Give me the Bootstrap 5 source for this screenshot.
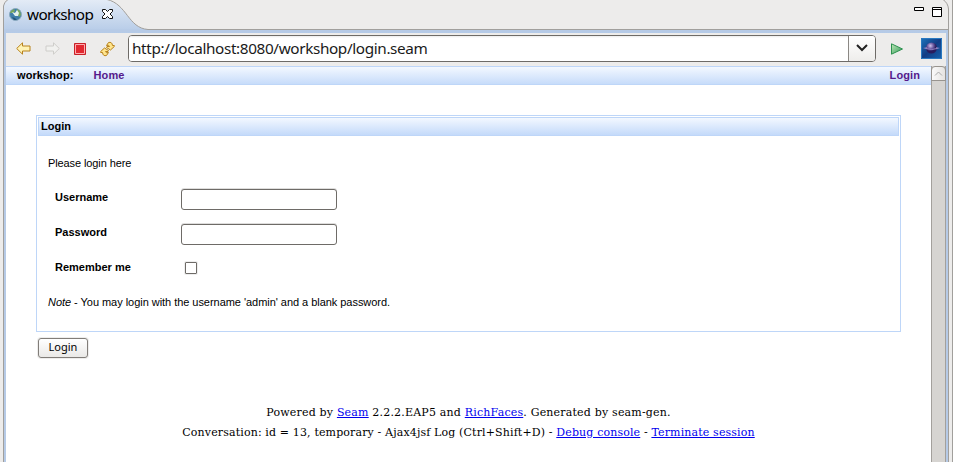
<!DOCTYPE html>
<html lang="en">
<head>
<meta charset="utf-8">
<title>workshop</title>
<meta name="viewport" content="width=device-width, initial-scale=1">
<link rel="stylesheet" href="https://cdn.jsdelivr.net/npm/bootstrap@5.3.0/dist/css/bootstrap.min.css">
<style>
body{background:#edeceb;color:#000;font-family:"Liberation Sans",Arial,sans-serif;font-size:11px;line-height:14px}
svg{display:block;flex:none}
.ide{height:462px;width:953px}
.tabstrip{height:29px}
.tab-shape{z-index:0}
.tab-title{z-index:1;padding:0 0 0 9px;height:28px}
.tab-title span{font:15.3px/20px "Noto Sans","Open Sans",sans-serif;width:66px;margin:0 9px 0 5px;letter-spacing:-.62px;white-space:nowrap}
.win-icons{padding:7px 10px 0 0;gap:8px;z-index:1}
.viewer{width:946px;margin-left:3px;border:solid #a19f9c;border-width:0 1px}
.viewer-in{border:solid #b6cae6;border-width:0 2px;background:#edeceb;padding-top:3px}
.toolbar{height:34px;padding:0 4px 1px 10px}
.tool-gap{margin-left:14px}
.url-box{width:748px;height:27px;margin-left:13px;border:1px solid #6e6b67;border-radius:4px;background:#fff;overflow:hidden}
.url-box input{border:0;outline:0;padding:0 0 1px 3px;color:#1a1a1a;font:15.3px/24px "Noto Sans","Open Sans",sans-serif;letter-spacing:-.37px;background:linear-gradient(#ececec,#fff 2px);min-width:0}
.drop{width:27px;border:0;border-left:1px solid #8b8884;background:linear-gradient(#fff,#eeedeb);padding:0 0 2px}
.menu-bar{height:19px;border:solid #bed6f8;border-width:1px 0;background:linear-gradient(#f3f8ff,#c7dcfa);padding:0 11px 2px;font-weight:700;letter-spacing:.1px}
.menu-bar a{color:#551a8b;text-decoration:none}
.scroller{width:15px;background:#d6d4d1;border:solid #a3a09c;border-width:0 1px}
.scroll-up{height:15px;margin:0 -1px;border:1px solid #98948f;border-radius:4px 4px 0 0;background:linear-gradient(90deg,#fafafa,#e5e3e1);padding:0}
.login-panel{margin:30px 30px 0;height:217px;border:1px solid #bed6f8;padding:1px}
.panel-head{height:19px;border:1px solid #bed6f8;background:linear-gradient(#f3f8ff,#c4dafa);padding:0 2px 1px;font-weight:700}
.panel-content{padding:20px 10px 0}
.panel-content .intro{letter-spacing:-.1px}
.panel-content .note-line{letter-spacing:-.04px}
.field-row{height:35px;padding-left:7px}
.field-row label{width:126px;font-weight:700}
.field-row .text-field{width:156px;height:21px;border:1px solid #6e6b67;border-radius:3px;box-shadow:0 -1px 0 #dedddc;padding:0 4px;margin-top:-1px}
.field-row .tick{appearance:none;width:12px;height:12px;border:1px solid #6e6b67;border-radius:1px;box-shadow:0 0 0 1px #eee;margin:2px 0 0 4px;background:#fff}
.login-btn{width:50px;height:20px;margin:6px 0 0 32px;padding:0 0 2px;border:1px solid #817d79;border-radius:3px;background:linear-gradient(#fff,#eae9e7);box-shadow:0 0 0 1px #eeedec;color:#000;font:11px/16px "Noto Sans","Open Sans",sans-serif}
.page-foot{font:11px/20px "DejaVu Serif",serif;letter-spacing:.19px;margin-top:45px;white-space:nowrap}
.page-foot .session-line{letter-spacing:.14px}
.page-foot a{color:#00e;text-decoration:underline}
.next-pane{width:1px;background:#a19f9c}
</style>
<script src="https://cdn.jsdelivr.net/npm/bootstrap@5.3.0/dist/js/bootstrap.bundle.min.js"></script>
</head>
<body class="overflow-hidden">
<div class="ide d-flex">
 <div class="d-flex flex-column flex-grow-1">
  <header class="tabstrip position-relative d-flex justify-content-between">
   <svg class="tab-shape position-absolute top-0 start-0" width="953" height="33" viewBox="0 0 953 33">
    <defs><linearGradient id="tab" x2="0" y2="1"><stop stop-color="#e3ebf6"/><stop offset="1" stop-color="#b4cae7"/></linearGradient></defs>
    <path d="M3.5 33V6Q4 2 8 0H107C127 4 128 28 148 29.500H948V33Z" fill="url(#tab)"/>
    <path d="M4 29.500H948V32H4Z" fill="#b6cae6"/>
    <path d="M3.500 33V6Q4 2 8-.5M107-.5C127 4 128 28 148 29.500H948M943-.5Q948 3 948.500 9V33" fill="none" stroke="#a19f9c"/>
   </svg>
   <div class="tab-title d-flex align-items-center position-relative">
    <svg width="13" height="13" viewBox="0 0 13 13"><circle cx="6.500" cy="6.500" r="6" fill="#3f7ea8" stroke="#8aa9bd"/><path d="M1 5 2 3 5 1 6 3 4 5Z" fill="#78a75d"/><path d="M8 1 11 3 12 7 10 9 8 5Z" fill="#78a75d"/><path d="M3 4 6 5 8 2 10 5 9 8 6 8Z" fill="#e4f1ec"/><path d="M3 9 6 10 8 12 5 12Z" fill="#245579"/></svg>
    <span>workshop</span>
    <svg width="11" height="10" viewBox="0 0 11 10" fill="#fff" stroke="#111"><path d="M.5.500H3.500L5.500 2.500 7.500.500H10.500V2.500L8 5 10.500 7.500V9.500H7.500L5.500 7.500 3.500 9.500H.5V7.500L3 5 .5 2.500Z"/></svg>
   </div>
   <div class="win-icons d-flex position-relative">
    <svg width="10" height="4"><path d="M.5.500H9.500V3.500H.5Z" fill="#fff" stroke="#000"/></svg>
    <svg width="10" height="10"><path d="M.5.500H9.500V9.500H.5ZM0 2.500H10" fill="#fff" stroke="#000"/></svg>
   </div>
  </header>
  <div class="viewer flex-grow-1 d-flex">
   <div class="viewer-in flex-grow-1 d-flex flex-column">
    <div class="toolbar d-flex align-items-center">
     <svg width="15" height="13" viewBox="0 0 15 13"><path d="M.7 6.500 6.500.8V4H14V9H6.500V12.200Z" fill="#fff3b5" stroke="#b8821b"/></svg>
     <svg class="tool-gap" width="15" height="13" viewBox="0 0 15 13"><path d="M14.300 6.500 8.500.8V4H1V9H8.500V12.200Z" fill="#f1f1ef" stroke="#cecdca"/></svg>
     <svg class="tool-gap" width="12" height="12"><path d="M.5.500H11.500V11.500H.5Z" fill="#e12830" stroke="#c82128"/><path d="M1.500 1.500H10.500V10.500H1.500Z" fill="none" stroke="#ffadb0"/></svg>
     <svg class="tool-gap" width="15" height="16" viewBox="0 0 15 16" fill="#ffe58d" stroke="#b8821b"><path id="turn" d="M6.500 4.500 8.500 1.500Q12 .5 12.500 4.500H14.300V5.500L10.500 9 6.500 6.500 7 5.500 9.500 5.500Q9 3.500 6.500 4.500Z"/><use href="#turn" transform="rotate(180 7.500 8)"/></svg>
     <div class="url-box d-flex"><input class="flex-grow-1" value="http://localhost:8080/workshop/login.seam" aria-label="Address"><button class="drop d-flex align-items-center justify-content-center" aria-label="History"><svg width="12" height="8"><path d="M1 1 6 6 11 1" fill="none" stroke="#222" stroke-width="2"/></svg></button></div>
     <svg class="tool-gap" width="13" height="12"><defs><linearGradient id="go" x2="1" y2="1"><stop stop-color="#c2e8b8"/><stop offset="1" stop-color="#2e9a58"/></linearGradient></defs><path d="M1.500 .8 12.500 6 1.500 11.200Z" fill="url(#go)" stroke="#2d9150"/></svg>
     <svg class="ms-auto" width="21" height="21" viewBox="0 0 21 21"><defs><linearGradient id="sky" x2="1" y2="1"><stop stop-color="#1d75bd"/><stop offset=".5" stop-color="#123d85"/><stop offset="1" stop-color="#1763ae"/></linearGradient><radialGradient id="globe" cx=".4" cy=".3"><stop stop-color="#d2c3ea"/><stop offset=".5" stop-color="#7565aa"/><stop offset="1" stop-color="#2a1c5d"/></radialGradient></defs><path d="M0 0H21V21H0Z" fill="url(#sky)"/><path d="M.5.500H20.500V20.500H.5Z" fill="none" stroke="#2a79c0"/><circle cx="10.500" cy="10" r="5.500" fill="url(#globe)"/><path d="M2 10 6 9.200V11.200ZM19 10 15 9.200V11.200Z" fill="#9b8cc8"/><path d="M5 10.500Q11 12.500 16 10.500" fill="none" stroke="#8f7fc0"/></svg>
    </div>
    <div class="d-flex flex-grow-1 bg-white">
     <main class="flex-grow-1">
      <nav class="menu-bar d-flex align-items-center"><span>workshop:</span><a class="home-link ms-3 ps-1" href="#">Home</a><a class="ms-auto" href="#">Login</a></nav>
      <section class="login-panel">
       <div class="panel-head d-flex align-items-center">Login</div>
       <div class="panel-content">
        <div class="intro">Please login here</div>
        <form class="pt-3 mt-1">
         <div class="field-row d-flex align-items-start"><label for="user">Username</label><input class="text-field" id="user" type="text"></div>
         <div class="field-row d-flex align-items-start"><label for="pass">Password</label><input class="text-field" id="pass" type="password"></div>
         <div class="field-row d-flex align-items-start"><label for="remember">Remember me</label><input class="tick" id="remember" type="checkbox"></div>
        </form>
        <div class="note-line"><em>Note</em> - You may login with the username 'admin' and a blank password.</div>
       </div>
      </section>
      <button class="login-btn d-block">Login</button>
      <footer class="page-foot text-center"><div>Powered by <a href="#">Seam</a> 2.2.2.EAP5 and <a href="#">RichFaces</a>. Generated by seam-gen.</div><div class="session-line">Conversation: id = 13, temporary - Ajax4jsf Log (Ctrl+Shift+D) - <a href="#">Debug console</a> - <a href="#">Terminate session</a></div></footer>
     </main>
     <div class="scroller d-flex flex-column"><button class="scroll-up d-flex align-items-center justify-content-center" aria-label="Scroll up"><svg width="9" height="5"><path d="M1 4.500 4.500 1 8 4.500" fill="none" stroke="#aaa"/></svg></button></div>
    </div>
   </div>
  </div>
 </div>
 <div class="next-pane"></div>
</div>
</body>
</html>
